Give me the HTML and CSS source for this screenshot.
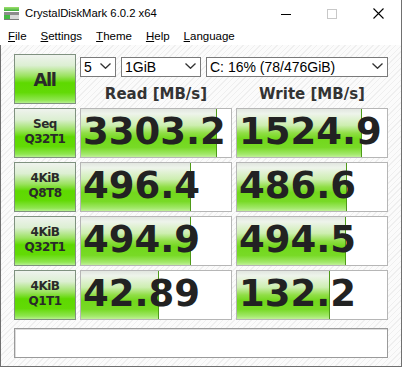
FILE: index.html
```html
<!DOCTYPE html>
<html>
<head>
<meta charset="utf-8">
<link rel="stylesheet" href="styles.css">
</head>
<body>
<div class="window">
  <div class="titlebar">
    <svg class="appicon" width="16" height="16" viewBox="0 0 16 16">
      <defs>
        <linearGradient id="g1" x1="0" y1="0" x2="0" y2="1">
          <stop offset="0" stop-color="#9ee06a"/>
          <stop offset="1" stop-color="#3fae3f"/>
        </linearGradient>
      </defs>
      <rect x="0" y="1" width="15" height="4" fill="url(#g1)"/>
      <rect x="0" y="6" width="15" height="3" fill="#8c8c8c"/>
      <rect x="0" y="9" width="15" height="5" fill="#d9d9d9"/>
      <rect x="0" y="9" width="6" height="5" fill="#45b845"/>
      <rect x="0" y="13" width="15" height="1" fill="#7a7a7a"/>
    </svg>
    <span class="title">CrystalDiskMark 6.0.2 x64</span>
    <div class="caption">
      <div class="cbtn"><svg width="10" height="10" viewBox="0 0 10 10"><path d="M0 5.5H10" stroke="#000" stroke-width="1"/></svg></div>
      <div class="cbtn"><svg width="10" height="10" viewBox="0 0 10 10"><rect x="0.5" y="0.5" width="9" height="9" fill="none" stroke="#c8c8c8" stroke-width="1"/></svg></div>
      <div class="cbtn"><svg width="11" height="11" viewBox="0 0 11 11"><path d="M0.5 0.5L10.5 10.5M10.5 0.5L0.5 10.5" stroke="#000" stroke-width="1.1"/></svg></div>
    </div>
  </div>
  <div class="menubar">
    <span class="menu"><u>F</u>ile</span>
    <span class="menu"><u>S</u>ettings</span>
    <span class="menu"><u>T</u>heme</span>
    <span class="menu"><u>H</u>elp</span>
    <span class="menu"><u>L</u>anguage</span>
  </div>
  <div class="client">
    <div class="grid">
      <div class="btn all">All</div>
      <div class="topright">
        <div class="selects">
          <div class="select s1"><span>5</span><svg width="11" height="6" viewBox="0 0 11 6"><path d="M0.5 0.5L5.5 5.3L10.5 0.5" fill="none" stroke="#333" stroke-width="1.3"/></svg></div>
          <div class="select s2"><span>1GiB</span><svg width="11" height="6" viewBox="0 0 11 6"><path d="M0.5 0.5L5.5 5.3L10.5 0.5" fill="none" stroke="#333" stroke-width="1.3"/></svg></div>
          <div class="select s3"><span>C: 16% (78/476GiB)</span><svg width="11" height="6" viewBox="0 0 11 6"><path d="M0.5 0.5L5.5 5.3L10.5 0.5" fill="none" stroke="#333" stroke-width="1.3"/></svg></div>
        </div>
        <div class="headers">
          <div class="hdr">Read [MB/s]</div>
          <div class="hdr">Write [MB/s]</div>
        </div>
      </div>

      <div class="btn label">Seq<br>Q32T1</div>
      <div class="val"><div class="bar" style="width:136px"></div><div class="num">3303.2</div></div>
      <div class="val"><div class="bar" style="width:125px"></div><div class="num">1524.9</div></div>

      <div class="btn label">4KiB<br>Q8T8</div>
      <div class="val"><div class="bar" style="width:110px"></div><div class="num">496.4</div></div>
      <div class="val"><div class="bar" style="width:110px"></div><div class="num">486.6</div></div>

      <div class="btn label">4KiB<br>Q32T1</div>
      <div class="val"><div class="bar" style="width:110px"></div><div class="num">494.9</div></div>
      <div class="val"><div class="bar" style="width:109px"></div><div class="num">494.5</div></div>

      <div class="btn label">4KiB<br>Q1T1</div>
      <div class="val"><div class="bar" style="width:78px"></div><div class="num">42.89</div></div>
      <div class="val"><div class="bar" style="width:93px"></div><div class="num">132.2</div></div>
    </div>
    <div class="comment"></div>
  </div>
</div>
</body>
</html>
```

FILE: styles.css
```css
* { box-sizing: border-box; }
html, body { margin: 0; padding: 0; background: #fff; }

.window {
  width: 402px;
  height: 367px;
  border-right: 1px solid #707070;
  border-bottom: 1px solid #707070;
  display: flex;
  flex-direction: column;
  background: #fff;
  font-family: "Liberation Sans", Arial, sans-serif;
}

.titlebar {
  height: 27px;
  display: flex;
  align-items: center;
  background: #fff;
}
.appicon { margin-left: 4px; margin-right: 5px; flex: none; }
.title {
  font-size: 11.3px;
  line-height: 27px;
  color: #000;
}
.caption { margin-left: auto; display: flex; height: 27px; }
.cbtn {
  width: 46px;
  height: 27px;
  display: flex;
  align-items: center;
  justify-content: center;
}

.menubar {
  height: 18px;
  display: flex;
  padding-left: 1px;
  background: #fff;
}
.menu {
  font-size: 11.5px;
  line-height: 18px;
  padding: 0 7px;
  color: #000;
}
.menu u { text-decoration-thickness: 1px; text-underline-offset: 1px; }

.client {
  flex: 1;
  border-left: 1px solid #707070;
  padding: 9px 13px 8px 13px;
  background: repeating-linear-gradient(135deg, #fbfbfb 0px, #fbfbfb 3px, #efefef 3px, #efefef 4px);
  display: flex;
  flex-direction: column;
}

.grid {
  display: grid;
  grid-template-columns: 62px 152px 152px;
  grid-auto-rows: 50px;
  gap: 4px;
}

.btn {
  border: 1px solid #7f917f;
  background: linear-gradient(to bottom, #eff3ee 0%, #dcefd2 22%, #9ae25e 44%, #5ed900 58%, #62da06 78%, #8fe650 94%, #b6f090 100%);
  display: flex;
  align-items: center;
  justify-content: center;
  text-align: center;
  color: #2a2a2a;
  font-family: "DejaVu Sans", Verdana, sans-serif;
  font-weight: bold;
}
.all {
  font-size: 18px;
  letter-spacing: -1.5px;
  padding-right: 1px;
}
.label {
  font-size: 12px;
  letter-spacing: -0.5px;
  line-height: 15px;
  padding-bottom: 3px;
}

.topright {
  grid-column: span 2;
  display: flex;
  flex-direction: column;
}
.selects {
  margin-top: 3px;
  height: 20px;
  display: flex;
  gap: 5px;
}
.select {
  height: 20px;
  border: 1px solid #7a7a7a;
  background: #fff;
  display: flex;
  align-items: center;
  padding: 0 4px 1px 3px;
  font-size: 14px;
  color: #000;
}
.select svg { margin-left: auto; margin-top: -1px; }
.s1 { width: 36px; }
.s2 { width: 80px; }
.s3 { width: 182px; }

.headers {
  margin-top: auto;
  height: 20px;
  display: grid;
  grid-template-columns: 152px 152px;
  gap: 4px;
}
.hdr {
  text-align: center;
  font-family: "DejaVu Sans", Verdana, sans-serif;
  font-weight: bold;
  font-size: 15px;
  line-height: 20px;
  color: #333;
}

.val {
  border: 1px solid #b6b6b6;
  background: #fff;
  display: grid;
  grid-template-columns: 1fr;
  grid-template-rows: 1fr;
  overflow: hidden;
}
.bar {
  grid-area: 1 / 1;
  height: 100%;
  border-right: 1px solid #4e9a18;
  background: linear-gradient(to bottom, #e2e6e0 0%, #eef4eb 10%, #cdeeb0 34%, #90de46 50%, #72d81c 62%, #78da26 80%, #a2e86a 94%, #c0f098 100%);
}
.num {
  grid-area: 1 / 1;
  font-family: "DejaVu Sans", Verdana, sans-serif;
  font-weight: bold;
  font-size: 37px;
  line-height: 46px;
  padding-left: 2px;
  color: #222;
  white-space: nowrap;
}

.comment {
  margin-top: 8px;
  height: 30px;
  border: 1px solid #9a9a9a;
  box-shadow: inset 1px 1px 0 #dcdcdc;
  background: #fff;
}
```
